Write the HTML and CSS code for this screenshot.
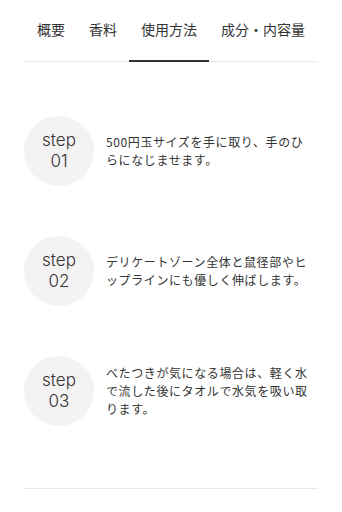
FILE: index.html
```html
<!DOCTYPE html>
<html lang="ja">
<head>
    <meta charset="UTF-8">
    <meta name="viewport" content="width=device-width, initial-scale=1.0">
    <title>使用方法</title>
    <link rel="stylesheet" href="styles.css">
</head>
<body>
    <div class="container">
        <nav class="tabs">
            <a class="tab">概要</a>
            <a class="tab">香料</a>
            <a class="tab active">使用方法</a>
            <a class="tab">成分・内容量</a>
        </nav>

        <div class="steps">
            <div class="step">
                <div class="step-num">step<br>01</div>
                <p class="step-text">500円玉サイズを手に取り、手のひらになじませます。</p>
            </div>
            <div class="step">
                <div class="step-num">step<br>02</div>
                <p class="step-text">デリケートゾーン全体と鼠径部やヒップラインにも優しく伸ばします。</p>
            </div>
            <div class="step">
                <div class="step-num">step<br>03</div>
                <p class="step-text">べたつきが気になる場合は、軽く水で流した後にタオルで水気を吸い取ります。</p>
            </div>
        </div>
    </div>
</body>
</html>
```

FILE: styles.css
```css
body {
    font-family: 'Noto Sans CJK JP', 'Noto Sans', sans-serif;
    background-color: #fff;
    color: #333;
    margin: 0;
}

.container {
    padding: 0 24px;
}

.tabs {
    display: flex;
    border-bottom: 1px solid #e9e9e9;
    padding: 0 1px;
}

.tab {
    display: block;
    flex: none;
    white-space: nowrap;
    padding: 19px 12px 22px;
    font-size: 14px;
    line-height: 20px;
    color: #333;
}

.tab.active {
    box-shadow: inset 0 -2px 0 #333;
    margin-bottom: -1px;
    padding-bottom: 23px;
}

.steps {
    display: flex;
    flex-direction: column;
    gap: 50px;
    padding: 54px 0 62px;
    border-bottom: 1px solid #e9e9e9;
}

.step {
    display: flex;
    align-items: center;
    gap: 12px;
}

.step-num {
    flex: none;
    width: 70px;
    height: 70px;
    border-radius: 50%;
    background-color: #f4f2f2;
    display: flex;
    align-items: center;
    justify-content: center;
    text-align: center;
    font-family: 'Inter', 'Noto Sans', sans-serif;
    font-weight: 300;
    font-size: 17px;
    line-height: 21px;
    color: #333;
}

.step-text {
    margin: 0;
    padding-right: 8px;
    font-size: 12px;
    line-height: 18px;
    letter-spacing: 0.6px;
    color: #333;
}
```
